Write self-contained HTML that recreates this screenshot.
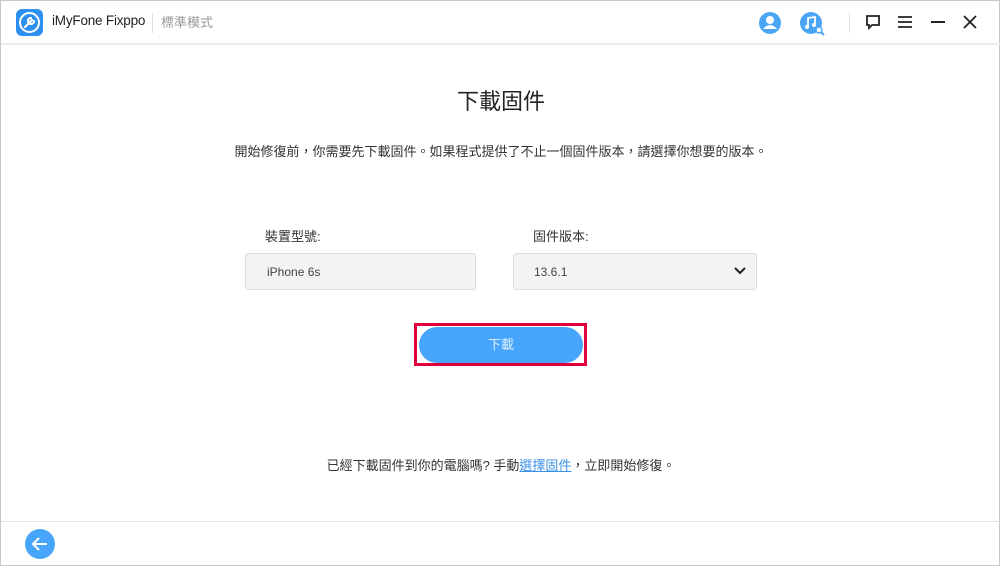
<!DOCTYPE html>
<html><head><meta charset="utf-8"><style>
*{margin:0;padding:0;box-sizing:border-box}
body{width:1000px;height:566px;background:#fff;font-family:"Liberation Sans","Noto Sans CJK TC",sans-serif;position:relative;overflow:hidden;border:1px solid #c8c8c8}
.a{position:absolute}
</style></head><body>
<div class="a" style="left:0;top:42px;width:1000px;height:2px;background:#ececec"></div>
<div class="a" style="left:15px;top:8px;width:27px;height:27px;border-radius:6px;background:#2d8ff0"></div>
<svg class="a" style="left:15px;top:8px" width="27" height="27"><circle cx="13.5" cy="13.5" r="9.5" fill="none" stroke="#fff" stroke-width="2"/><path d="M9 18 L16 11 M15 9 a3 3 0 1 0 3 3" stroke="#fff" stroke-width="2.2" fill="none" stroke-linecap="round"/></svg>
<div class="a" style="left:51px;top:12px;font-size:13.5px;color:#222;letter-spacing:-0.2px">iMyFone Fixppo</div>
<div class="a" style="left:151px;top:12px;width:1px;height:20px;background:#ddd"></div>
<div class="a" style="left:160px;top:11px;font-size:13px;color:#999">標準模式</div>
<svg class="a" style="left:757px;top:10px" width="24" height="24"><circle cx="12" cy="12" r="11" fill="#4aa6f5"/><circle cx="12" cy="9" r="4" fill="#fff"/><path d="M5 18 q7-8 14 0" fill="#fff"/></svg>
<svg class="a" style="left:798px;top:10px" width="30" height="26"><circle cx="12" cy="12" r="11" fill="#4aa6f5"/><path d="M9 16 V7 L16 6 V14" stroke="#fff" stroke-width="1.8" fill="none"/><circle cx="8" cy="16" r="2" fill="#fff"/><circle cx="15" cy="14" r="2" fill="#fff"/><circle cx="20" cy="19" r="3" fill="#fff" stroke="#4aa6f5" stroke-width="1.5"/><path d="M22 21 l3 3" stroke="#4aa6f5" stroke-width="2"/></svg>
<div class="a" style="left:848px;top:12px;width:1px;height:20px;background:#ddd"></div>
<svg class="a" style="left:864px;top:13px" width="16" height="16"><path d="M2 2h12v9H7l-3 3v-3H2z" fill="none" stroke="#222" stroke-width="1.8"/></svg>
<svg class="a" style="left:897px;top:15px" width="14" height="12"><path d="M0 1h14M0 6h14M0 11h14" stroke="#222" stroke-width="1.8"/></svg>
<div class="a" style="left:930px;top:20px;width:14px;height:2px;background:#222"></div>
<svg class="a" style="left:962px;top:14px" width="14" height="14"><path d="M1 1l12 12M13 1L1 13" stroke="#222" stroke-width="1.8"/></svg>
<div class="a" style="left:0;top:83px;width:1000px;text-align:center;font-size:22px;color:#222">下載固件</div>
<div class="a" style="left:0;top:140px;width:1000px;text-align:center;font-size:13px;color:#333">開始修復前，你需要先下載固件。如果程式提供了不止一個固件版本，請選擇你想要的版本。</div>
<div class="a" style="left:264px;top:225px;font-size:13px;color:#333">裝置型號:</div>
<div class="a" style="left:532px;top:225px;font-size:13px;color:#333">固件版本:</div>
<div class="a" style="left:244px;top:252px;width:231px;height:37px;background:#f3f3f3;border:1px solid #ddd;border-radius:3px;font-size:12px;color:#444;padding:11px 0 0 21px">iPhone 6s</div>
<div class="a" style="left:512px;top:252px;width:244px;height:37px;background:#f3f3f3;border:1px solid #ddd;border-radius:3px;font-size:12px;color:#444;padding:11px 0 0 20px">13.6.1</div>
<svg class="a" style="left:733px;top:266px" width="12" height="8"><path d="M1 1l5 5 5-5" stroke="#222" stroke-width="2" fill="none"/></svg>
<div class="a" style="left:413px;top:322px;width:173px;height:43px;border:3px solid #e0003c"></div>
<div class="a" style="left:418px;top:326px;width:164px;height:36px;border-radius:18px;background:#47a6fc;color:#dceeff;font-size:13px;text-align:center;line-height:36px">下載</div>
<div class="a" style="left:0;top:454px;width:1000px;text-align:center;font-size:13px;color:#333">已經下載固件到你的電腦嗎? 手動<span style="color:#3a93e8;text-decoration:underline">選擇固件</span>，立即開始修復。</div>
<div class="a" style="left:0;top:520px;width:1000px;height:1px;background:#e2e2e2"></div>
<svg class="a" style="left:24px;top:528px" width="30" height="30"><circle cx="15" cy="15" r="15" fill="#47a6fc"/><path d="M22 15H8M14 9l-6 6 6 6" stroke="#fff" stroke-width="2" fill="none"/></svg>
</body></html>
